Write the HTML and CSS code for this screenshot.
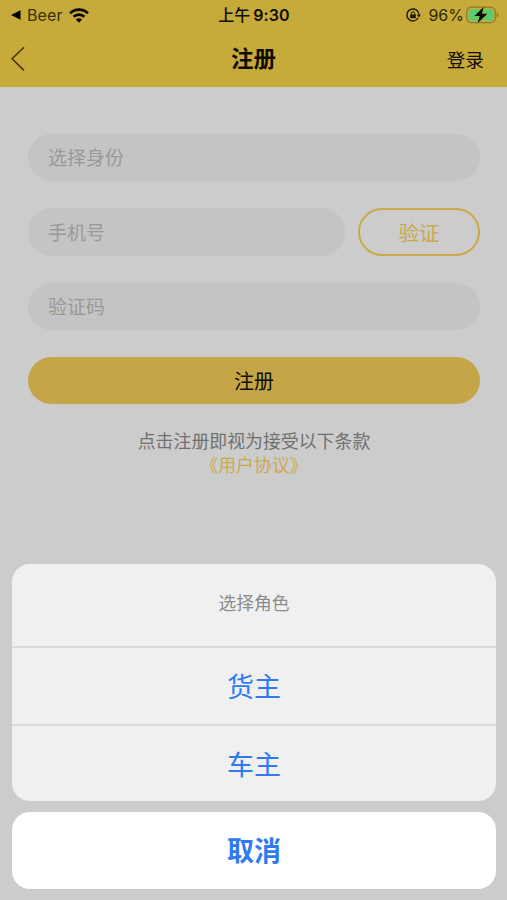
FILE: index.html
```html
<!DOCTYPE html>
<html lang="zh-CN">
<head>
<meta charset="utf-8">
<title>注册</title>
<link rel="stylesheet" href="styles.css">
</head>
<body>
<header class="top">
  <div class="status">
    <div class="status-left">
      <svg class="back-app" width="10" height="10" viewBox="0 0 10 10"><path d="M0 5 9.5 .3v9.4z"/></svg>
      <span class="app-name">Beer</span>
      <svg class="wifi" width="20" height="15" viewBox="0 0 20 15" fill="none" stroke="#080700" stroke-width="2.6"><path d="M1.1 5.3a12.6 12.6 0 0 1 17.8 0M4.6 8.8a7.7 7.7 0 0 1 10.8 0"/><path d="M6.9 11.6a4.5 4.5 0 0 1 6.2 0L10 14.8z" fill="#080700" stroke="none"/></svg>
    </div>
    <div class="clock"><span class="ampm">上午</span>9:30</div>
    <div class="status-right">
      <svg class="lock" width="15" height="14" viewBox="0 0 15 14" fill="none" stroke="#1c1700"><path d="M12.1 10A6 6 0 1 1 12.1 3.9" stroke-width="1.4"/><path d="M12.1 3.9a6 6 0 0 1 .8 3.1" stroke-width="1.2"/><path d="M10.9 6.8h4l-2 2.8z" fill="#1c1700" stroke="none"/><path d="M5.3 7V5.4a1.7 1.7 0 0 1 3.4 0V7" stroke-width="1"/><path d="M4.2 6.5h5.6v3.7H4.2z" fill="#1c1700" stroke="none"/></svg>
      <span class="percent">96%</span>
      <svg class="battery" width="33" height="18" viewBox="0 0 33 18"><rect x=".7" y="1.2" width="28.6" height="15.4" rx="4.6" fill="none" stroke="#8c7929" stroke-width="1.2"/><rect x="2.6" y="3.1" width="24.6" height="11.6" rx="2.8" fill="#5bcb6b"/><path d="M30.6 6.5q1.8.7 1.8 2.5t-1.8 2.5z" fill="#8c7929"/><path d="M17.8.8 8.4 10.1h5.3L11.5 17.2 21.4 7.7h-5.5z" fill="#080700" stroke="#c6aa3a" stroke-width=".6" paint-order="stroke"/></svg>
    </div>
  </div>
  <nav class="nav">
    <svg class="chevron" width="14" height="26" viewBox="0 0 14 26" fill="none" stroke="#443806" stroke-width="1.6"><path d="M13 1.2 1.1 12.8 13 24.4"/></svg>
    <h1 class="title">注册</h1>
    <a class="login">登录</a>
  </nav>
</header>
<main class="form">
  <div class="field">选择身份</div>
  <div class="phone-row">
    <div class="field phone">手机号</div>
    <button class="verify">验证</button>
  </div>
  <div class="field">验证码</div>
  <button class="register">注册</button>
  <p class="terms">点击注册即视为接受以下条款<a class="agreement">《用户协议》</a></p>
</main>
<section class="sheet">
  <div class="options">
    <div class="sheet-title">选择角色</div>
    <div class="option">货主</div>
    <div class="option">车主</div>
  </div>
  <div class="cancel">取消</div>
</section>
</body>
</html>
```
FILE: styles.css
```css
* { box-sizing: border-box; }
body {
  margin: 0;
  width: 507px;
  height: 900px;
  display: flex;
  flex-direction: column;
  overflow: hidden;
  background: #ccc;
  font-family: Inter, "Noto Sans CJK SC", sans-serif;
}
button { font-family: inherit; padding: 0; }
.top { height: 87px; background: #c6aa3a; color: #100d00; flex: none; }
.status, .nav { display: grid; grid-template-columns: 1fr auto 1fr; align-items: center; }
.status { height: 30px; padding: 0 8px 0 11px; }
.status-left, .status-right, .clock { display: flex; align-items: center; }
.status-left { margin-right: 3px; }
.status-right { justify-content: flex-end; margin-left: 1px; }
.app-name { font-size: 16px; letter-spacing: .1px; margin: 0 6px 0 6px; color: #3d3207; }
.clock { font-size: 16px; font-weight: 600; line-height: 20px; letter-spacing: .1px; position: relative; left: -1px; }
.ampm { font-size: 16px; font-weight: 500; margin-right: 3px; letter-spacing: 0; }
.percent { font-size: 16px; margin: 0 2px 0 7px; color: #302704; letter-spacing: 0; }
.nav { height: 57px; padding: 0 11px; }
.title { margin: 0; font-size: 22.5px; font-weight: 700; line-height: 30px; }
.login { justify-self: end; margin-right: 12px; font-size: 18.7px; }
.form { padding: 47px 27px 0 28px; display: flex; flex-direction: column; gap: 27px; }
.field {
  height: 47px;
  border-radius: 24px;
  background: #c4c4c4;
  color: #999;
  padding: 1px 0 0 20px;
  font-size: 19px;
  line-height: 48px;
}
.phone-row { display: flex; gap: 13px; height: 48px; }
.phone-row .field { height: 48px; padding-top: 2px; }
.phone { flex: 1; }
.verify {
  width: 122px;
  border: 2px solid #c8a94b;
  border-radius: 24px;
  background: none;
  color: #c8a94b;
  font-size: 20.5px;
}
.register {
  height: 47px;
  border: 0;
  border-radius: 24px;
  background: #c4a548;
  color: #100d00;
  font-size: 20px;
}
.terms {
  margin: -1px 0 0;
  text-align: center;
  font-size: 17.9px;
  line-height: 24px;
  color: #707070;
}
.agreement { display: block; color: #cbaa4c; }
.sheet { margin: auto 11px 11px 12px; text-align: center; color: #2f7af0; }
.options { height: 237px; border-radius: 18px; background: #f0f0f0; overflow: hidden; }
.sheet-title { height: 82px; line-height: 80px; font-size: 17.8px; color: #8c8c8c; }
.option { height: 78px; border-top: 2px solid #d9d9d9; font-size: 27px; line-height: 79px; }
.cancel {
  height: 77px;
  margin-top: 11px;
  border-radius: 18px;
  background: #fff;
  font-size: 27px;
  font-weight: 700;
  line-height: 80px;
}
```
